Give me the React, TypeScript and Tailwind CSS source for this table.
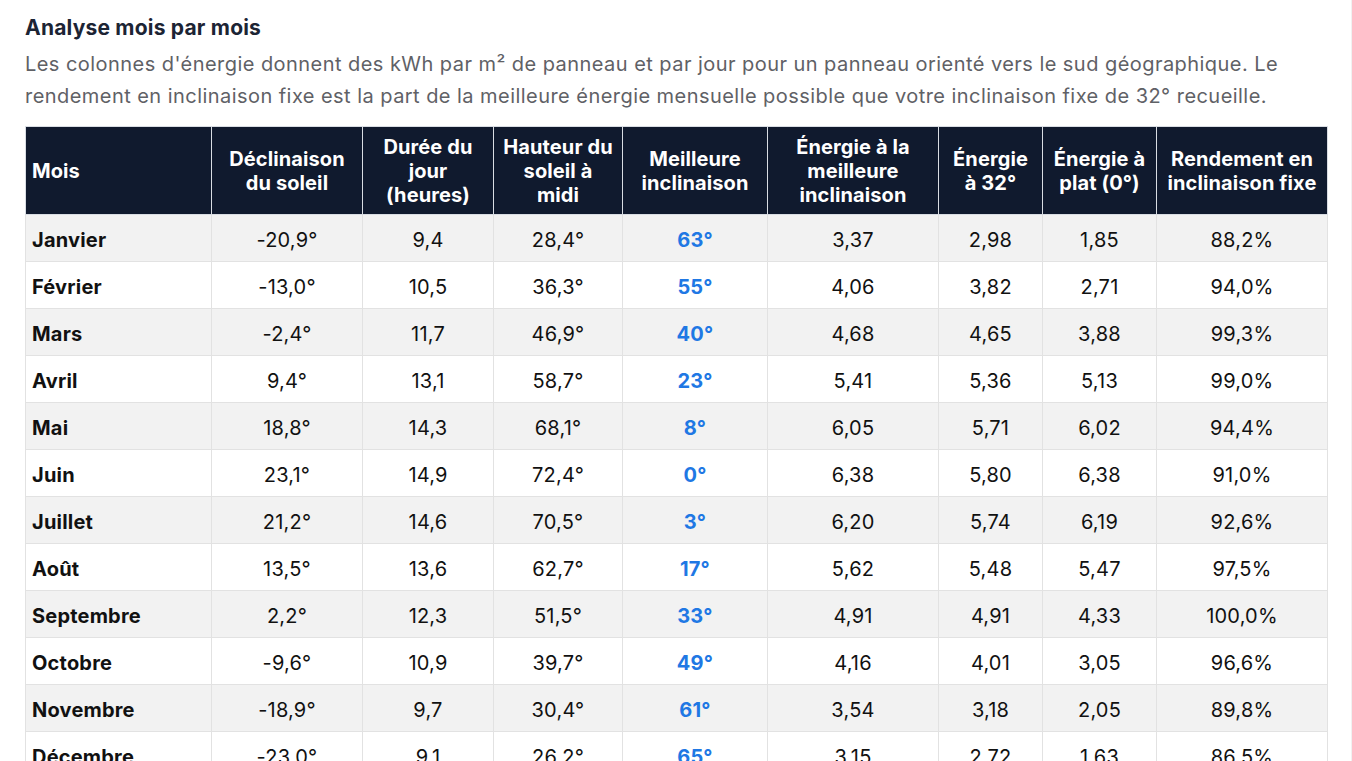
import React from 'react';

const rows = [
  ['Janvier', '-20,9°', '9,4', '28,4°', '63°', '3,37', '2,98', '1,85', '88,2%'],
  ['Février', '-13,0°', '10,5', '36,3°', '55°', '4,06', '3,82', '2,71', '94,0%'],
  ['Mars', '-2,4°', '11,7', '46,9°', '40°', '4,68', '4,65', '3,88', '99,3%'],
  ['Avril', '9,4°', '13,1', '58,7°', '23°', '5,41', '5,36', '5,13', '99,0%'],
  ['Mai', '18,8°', '14,3', '68,1°', '8°', '6,05', '5,71', '6,02', '94,4%'],
  ['Juin', '23,1°', '14,9', '72,4°', '0°', '6,38', '5,80', '6,38', '91,0%'],
  ['Juillet', '21,2°', '14,6', '70,5°', '3°', '6,20', '5,74', '6,19', '92,6%'],
  ['Août', '13,5°', '13,6', '62,7°', '17°', '5,62', '5,48', '5,47', '97,5%'],
  ['Septembre', '2,2°', '12,3', '51,5°', '33°', '4,91', '4,91', '4,33', '100,0%'],
  ['Octobre', '-9,6°', '10,9', '39,7°', '49°', '4,16', '4,01', '3,05', '96,6%'],
  ['Novembre', '-18,9°', '9,7', '30,4°', '61°', '3,54', '3,18', '2,05', '89,8%'],
  ['Décembre', '-23,0°', '9,1', '26,2°', '65°', '3,15', '2,72', '1,63', '86,5%'],
];

// header lines, broken as in the design
const headers = [
  ['Mois'],
  ['Déclinaison', 'du soleil'],
  ['Durée du', 'jour', '(heures)'],
  ['Hauteur du', 'soleil à', 'midi'],
  ['Meilleure', 'inclinaison'],
  ['Énergie à la', 'meilleure', 'inclinaison'],
  ['Énergie', 'à 32°'],
  ['Énergie à', 'plat (0°)'],
  ['Rendement en', 'inclinaison fixe'],
];

const widths = [186, 151, 131, 129, 145, 171, 104, 114, 171];

export default function App() {
  return (
    <div className="h-[761px] overflow-hidden bg-white border-r border-[#f1f1f1] font-['Inter','Liberation_Sans',sans-serif]">
      <div className="pl-[25px] pr-[25px] pt-[13px]">
        <h2 className="text-[21px] leading-[30px] font-bold tracking-[0.2px] text-[#1c2434]">Analyse mois par mois</h2>
        <p className="mt-[5px] text-[20px] leading-[32px] tracking-[0.45px] text-[#5f6166]">
          Les colonnes d'énergie donnent des kWh par m² de panneau et par jour pour un panneau orienté vers le sud géographique. Le rendement en inclinaison fixe est la part de la meilleure énergie mensuelle possible que votre inclinaison fixe de 32° recueille.
        </p>
        <table className="mt-[14px] w-[1302px] table-fixed border-collapse border border-[#d9dde3]">
          <colgroup>
            {widths.map((w, i) => (
              <col key={i} style={{ width: w }} />
            ))}
          </colgroup>
          <thead>
            <tr className="bg-[#101a2e]">
              {headers.map((h, i) => (
                <th
                  key={i}
                  className={`h-[88px] border border-[#d9dde3] whitespace-nowrap text-[20px] leading-[24px] font-bold tracking-[0.1px] text-white ${i === 0 ? 'px-[6px] text-left' : 'px-[4px] text-center'}`}
                >
                  {h.map((line, li) => (
                    <div key={li}>{line}</div>
                  ))}
                </th>
              ))}
            </tr>
          </thead>
          <tbody>
            {rows.map((r, ri) => (
              <tr key={r[0]} className={ri % 2 === 0 ? 'bg-[#f2f2f2]' : 'bg-white'}>
                {r.map((c, ci) => (
                  <td
                    key={ci}
                    className={`h-[47px] border border-[#e2e2e2] px-[6px] pt-[3px] pb-0 text-[20px] leading-[24px] tracking-[0.2px] ${
                      ci === 0
                        ? 'text-left font-bold text-[#111]'
                        : ci === 4
                        ? 'text-center font-bold text-[#1f78e4]'
                        : 'text-center text-[#111]'
                    }`}
                  >
                    {c}
                  </td>
                ))}
              </tr>
            ))}
          </tbody>
        </table>
      </div>
    </div>
  );
}
